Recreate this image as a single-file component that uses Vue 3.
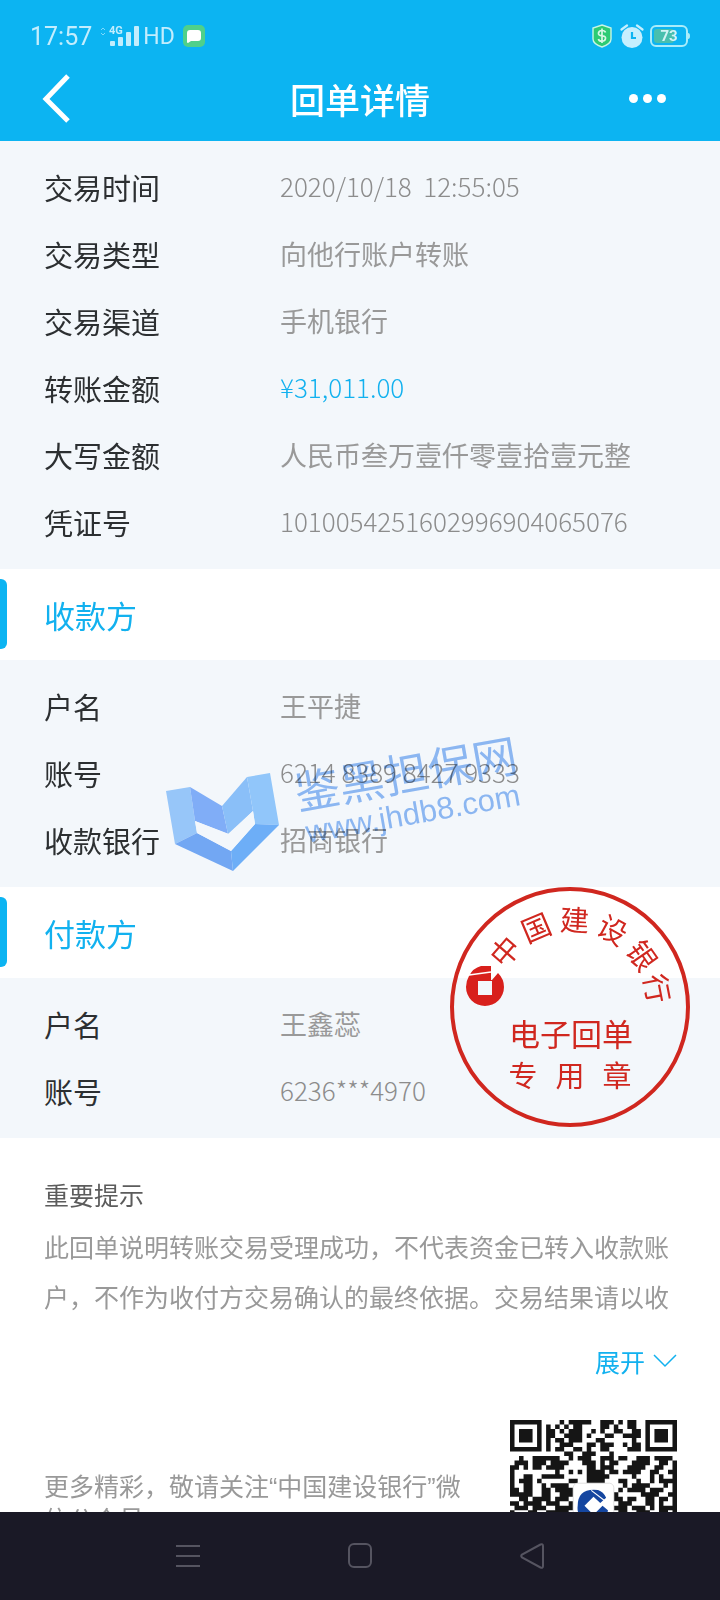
<template>
  <div class="screen">
    <header class="top">
      <div class="status">
        <div class="status-left">
          <span class="clock">17:57</span>
          <svg class="signal" viewBox="0 0 39 24" aria-hidden="true">
            <path d="M1 6l2-2 2 2M1 9l2 2 2-2" fill="none" stroke="#7ed8fb" />
            <text x="9" y="10" class="signal-text">4G</text>
            <rect x="10" y="17" width="5" height="5" rx="1" />
            <rect x="18" y="13" width="5" height="9" rx="1" />
            <rect x="26" y="8" width="5" height="14" rx="1" />
            <rect x="34" y="2" width="5" height="20" rx="1" />
          </svg>
          <span class="hd">HD</span>
          <svg class="chat" viewBox="0 0 22 22" aria-hidden="true">
            <rect width="22" height="22" rx="5" fill="#4fd08a" />
            <path d="M7 5h8q3 0 3 3v5q0 3-3 3H8l-3 2q-1 0-1-1V8q0-3 3-3z" fill="#fff" />
          </svg>
        </div>
        <div class="status-right">
          <svg class="shield" viewBox="0 0 20 24" aria-hidden="true">
            <path d="M10 1l9 3v11q0 5-9 8-9-3-9-8V4z" fill="#2dcb74" stroke="#c8f5e4" stroke-width="1.4" />
            <path d="M13.5 8.500q-.5-2-3.500-2t-3.500 2.500 3.500 2.800 3.500 2.800-3.500 2.600-3.600-2.200M10 4.500v14.500" fill="none" stroke="#d8f8e6" stroke-width="1.700" />
          </svg>
          <svg class="alarm" viewBox="0 0 24 24" aria-hidden="true">
            <circle cx="12" cy="13.500" r="10.500" fill="#c6effe" />
            <path d="M1.500 5.500l5.500-4M22.500 5.500l-5.500-4" stroke="#c6effe" stroke-width="2.200" stroke-linecap="round" />
            <path d="M12 8v6h4" fill="none" stroke="#0cb4f2" stroke-width="2.200" />
          </svg>
          <svg class="battery" viewBox="0 0 40 22" aria-hidden="true">
            <rect x="1" y="1" width="36" height="20" rx="5" fill="none" stroke="#a9ecfa" stroke-width="2" />
            <rect x="4" y="4" width="20" height="14" rx="3" fill="#48bfae" />
            <path d="M38 8q2 0 2 3t-2 3z" fill="#a9ecfa" />
            <text x="19" y="16" text-anchor="middle" class="battery-text">73</text>
          </svg>
        </div>
      </div>
      <div class="bar">
        <button class="back" type="button" aria-label="返回">
          <svg viewBox="0 0 28 50"><path d="M26 2L4 25l22 22" fill="none" stroke="#fff" stroke-width="5" /></svg>
        </button>
        <h1>回单详情</h1>
        <button class="more" type="button" aria-label="更多">
          <i></i><i></i><i></i>
        </button>
      </div>
    </header>

    <main class="content">
      <dl class="rows">
        <div v-for="row in detail" :key="row.label" class="row">
          <dt>{{ row.label }}</dt>
          <dd :class="row.kind">{{ row.value }}</dd>
        </div>
      </dl>

      <section class="party">
        <h2>收款方</h2>
        <dl class="rows">
          <div v-for="row in payee" :key="row.label" class="row">
            <dt>{{ row.label }}</dt>
            <dd :class="row.kind">{{ row.value }}</dd>
          </div>
        </dl>
        <svg class="watermark" viewBox="0 0 372 150" aria-hidden="true">
          <path d="M6 61l24-4 5 34 2 12-22 11z" fill="#9fcdfd" />
          <path d="M30 57l32 19 6 28-33-13z" fill="#86b3fb" />
          <path d="M62 76l25-29 6 34-25 23z" fill="#91c5fc" />
          <path d="M87 47l23-4 9 52-24-1-2-13z" fill="#98cdfe" />
          <path d="M15 114l22-11 34 18 2 20z" fill="#78adf7" />
          <path d="M71 121l24-27 24 1-46 46z" fill="#72b4fb" />
          <path d="M35 91l34 13 24-23 2 13-24 27-34-18z" fill="#fff" />
          <g transform="translate(138 80) rotate(-10)" class="watermark-text">
            <text x="0" y="0" class="watermark-name">鉴黑担保网</text>
            <text x="4" y="34" class="watermark-url">www.jhdb8.com</text>
          </g>
        </svg>
      </section>

      <section class="party">
        <h2>付款方</h2>
        <dl class="rows">
          <div v-for="row in payer" :key="row.label" class="row">
            <dt>{{ row.label }}</dt>
            <dd :class="row.kind">{{ row.value }}</dd>
          </div>
        </dl>
        <svg class="seal" viewBox="0 0 240 240">
          <circle cx="120" cy="120" r="118" fill="none" stroke="#d0271f" stroke-width="4" />
          <g class="seal-arc">
            <text
              v-for="item in sealArc"
              :key="item.char"
              x="120"
              y="44"
              :transform="`rotate(${item.angle} 122 120)`"
            >{{ item.char }}</text>
          </g>
          <path
            d="M41 79H31Q23 81 19 89 16 94 16 100A19 19 0 0 0 54 100Q54 92 48 86L42 93H41zM28 94H42V108H28z"
            fill="#d8201c"
            fill-rule="evenodd"
          />
          <path d="M19 88l22-3" stroke="#fff" stroke-width="1.500" />
          <text x="121" y="159" class="seal-line">电子回单</text>
          <g class="seal-small">
            <text x="73" y="200">专</text>
            <text x="120" y="200">用</text>
            <text x="167" y="200">章</text>
          </g>
        </svg>
      </section>

      <section class="notice">
        <h3>重要提示</h3>
        <p>此回单说明转账交易受理成功，不代表资金已转入收款账户，不作为收付方交易确认的最终依据。交易结果请以收</p>
        <button class="expand" type="button">
          展开
          <svg viewBox="0 0 24 14" aria-hidden="true"><path d="M1 1l11 11L23 1" fill="none" stroke="#12b1ef" stroke-width="1.500" /></svg>
        </button>
      </section>

      <section class="follow">
        <p>更多精彩，敬请关注“中国建设银行”微信公众号</p>
        <svg class="qr" viewBox="0 0 37 37" role="img" aria-label="二维码">
          <path :d="qrPath" fill="#151515" />
          <rect x="14" y="14" width="9" height="9" rx="1" fill="#fff" stroke="#ddd" stroke-width=".2" />
          <path
            d="M19.500 15.500Q15 15 15 19A3.300 3.300 0 0 0 21.700 20L20.500 19 18.500 21 16.500 19 18.500 17 20 18.400 21.300 17.200Q20.700 15.900 19.500 15.500z"
            fill="#1546a0"
          />
          <path d="M18 15.600l3 2.300" stroke="#fff" stroke-width=".25" />
        </svg>
      </section>
    </main>

    <nav class="keys">
      <button type="button" aria-label="菜单">
        <svg viewBox="0 0 24 26"><path d="M0 3h24M0 13h24M0 23h24" /></svg>
      </button>
      <button type="button" aria-label="主页">
        <svg viewBox="0 0 24 26"><rect x="1" y="1" width="22" height="23" rx="5" /></svg>
      </button>
      <button type="button" aria-label="后退">
        <svg viewBox="0 0 24 26"><path d="M20.500 1.500L2 11.500q-1.500 1.500 0 3l18.500 10q2.500 1 2.500-1.500V3q0-2.500-2.500-1.500z" /></svg>
      </button>
    </nav>
  </div>
</template>

<script setup>
import { computed } from 'vue'

const detail = [
  { label: '交易时间', value: '2020/10/18  12:55:05', kind: 'number' },
  { label: '交易类型', value: '向他行账户转账' },
  { label: '交易渠道', value: '手机银行' },
  { label: '转账金额', value: '¥31,011.00', kind: 'number amount' },
  { label: '大写金额', value: '人民币叁万壹仟零壹拾壹元整' },
  { label: '凭证号', value: '1010054251602996904065076', kind: 'number' },
]

const payee = [
  { label: '户名', value: '王平捷' },
  { label: '账号', value: '6214 8389 8427 9333', kind: 'number' },
  { label: '收款银行', value: '招商银行' },
]

const payer = [
  { label: '户名', value: '王鑫蕊' },
  { label: '账号', value: '6236***4970', kind: 'number' },
]

const sealArc = [
  { char: '中', angle: -49 },
  { char: '国', angle: -23 },
  { char: '建', angle: 3 },
  { char: '设', angle: 29 },
  { char: '银', angle: 55 },
  { char: '行', angle: 79 },
]

const qrRows = [
  '#######....#.#####..###.#.##..#######',
  '#.....#.#.#.#.##....##.#..##..#.....#',
  '#.###.#.##.#.###..#.#..##..##.#.###.#',
  '#.###.#.##..####.#...##..####.#.###.#',
  '#.###.#.#.##.###...##......#..#.###.#',
  '#.....#.#..###...##.###..#.##.#.....#',
  '#######.#.##..##.#..##....###.#######',
  '............##..###...#..............',
  '..#..######..#.###..###.##..###.####.',
  '.###.###.####...###.#.##...####..##.#',
  '##.#.##.####.....##.###...####..##..#',
  '#.........#..#.#.####.##.####..##..##',
  '#..##..#####.....#####.....#...#.#..#',
  '#.###.#......##..####...##..#..#.####',
  '#..##..#.####............#.####...#.#',
  '##.##..##.####..........#.####.###..#',
  '#####..##..###.........#.....####..##',
  '..##.####.###..........##.##..##.##.#',
  '##.####.###..#..........###...##.#..#',
  '.###.###..####.........###.###.#.####',
  '#...##..#####...........##..###..##.#',
  '.##.##...####..........##..####..##..',
]

const qrPath = computed(() =>
  qrRows
    .flatMap((line, y) => [...line].map((cell, x) => (cell === '#' ? `M${x} ${y}h1v1h-1z` : '')))
    .join('')
)
</script>

<style>
body {
  margin: 0;
  background: #fff;
}
</style>

<style scoped>
.screen {
  height: 100vh;
  display: flex;
  flex-direction: column;
  overflow: hidden;
  background: #fff;
  font-family: "Noto Sans CJK SC", sans-serif;
}

h1,
h2,
h3,
p,
dl,
dd {
  margin: 0;
  font-weight: 400;
}

button {
  padding: 0;
  border: 0;
  background: none;
  font-family: inherit;
}

svg {
  display: block;
}

.top {
  flex: none;
  background: #0cb4f2;
}

.status {
  height: 40px;
  padding: 16px 30px 0;
  display: flex;
  align-items: center;
  justify-content: space-between;
  color: #c3edfd;
  font-family: Roboto, sans-serif;
}

.status-left,
.status-right {
  display: flex;
  align-items: center;
  gap: 8px;
}

.clock {
  font-size: 25px;
}

.signal {
  width: 39px;
  height: 24px;
  fill: #c3edfd;
}

.signal-text {
  font: 700 11px Roboto, sans-serif;
}

.hd {
  margin-left: -4px;
  font-size: 23px;
}

.chat {
  width: 22px;
  height: 22px;
}

.shield {
  width: 20px;
  height: 24px;
}

.alarm {
  width: 24px;
  height: 24px;
}

.battery {
  width: 40px;
  height: 22px;
  margin-left: -2px;
}

.battery-text {
  font: 700 15px Roboto, sans-serif;
  fill: #d3f4f5;
}

.bar {
  height: 85px;
  padding: 0 42px;
  display: grid;
  grid-template-columns: 1fr auto 1fr;
  align-items: center;
}

.bar h1 {
  color: #fff;
  font-size: 35px;
  line-height: 50px;
  font-weight: 500;
}

.back {
  justify-self: start;
}

.back svg {
  width: 28px;
  height: 50px;
}

.more {
  justify-self: end;
  display: flex;
  gap: 5px;
  padding: 8px 12px;
}

.more i {
  width: 9px;
  height: 9px;
  border-radius: 50%;
  background: #fff;
}

.content {
  flex: 1;
  min-height: 0;
  overflow: hidden;
}

.rows {
  padding: 12px 44px 14px;
  background: #f3f7fb;
}

.row {
  display: flex;
  align-items: center;
  height: 67px;
}

dt {
  flex: none;
  width: 236px;
  color: #2c2f31;
  font-size: 29px;
}

dd {
  color: #999;
  font-size: 27px;
  white-space: pre;
}

.number {
  padding-bottom: 2px;
  color: #8c8c8c;
  font-size: 26px;
  font-weight: 300;
}

.amount {
  color: #12b1ef;
}

.party {
  position: relative;
}

.party h2 {
  position: relative;
  padding-left: 44px;
  color: #12b1ef;
  font-size: 31px;
  line-height: 91px;
}

.party h2::before {
  content: "";
  position: absolute;
  left: 0;
  top: 10px;
  width: 7px;
  height: 70px;
  border-radius: 0 6px 6px 0;
  background: #0cb4f2;
}

.watermark {
  position: absolute;
  left: 160px;
  top: 161px;
  width: 372px;
  height: 150px;
  mix-blend-mode: multiply;
}

.watermark-text {
  fill: #6ea6f2;
  opacity: 0.75;
}

.watermark-name {
  font-size: 45px;
  font-weight: 400;
}

.watermark-url {
  font-family: "Liberation Sans", sans-serif;
  font-size: 31px;
}

.seal {
  position: absolute;
  right: 30px;
  top: 0;
  width: 240px;
  height: 240px;
  fill: #d0271f;
  text-anchor: middle;
}

.seal-arc,
.seal-small {
  font-size: 29px;
}

.seal-line {
  font-size: 31px;
}

.notice {
  padding: 36px 43px 0 44px;
  display: flex;
  flex-direction: column;
}

.notice h3 {
  color: #5c5c5c;
  font-size: 25px;
  line-height: 40px;
}

.notice p {
  margin-top: 7px;
  color: #999;
  font-size: 25px;
  line-height: 50px;
}

.expand {
  align-self: flex-end;
  display: flex;
  align-items: center;
  gap: 8px;
  height: 40px;
  margin-top: 20px;
  color: #12b1ef;
  font-size: 25px;
}

.expand svg {
  width: 24px;
  height: 14px;
}

.follow {
  padding: 39px 43px 0 44px;
  display: flex;
  align-items: center;
  gap: 40px;
}

.follow p {
  flex: 1;
  color: #999;
  font-family: "Liberation Sans", "Noto Sans CJK SC", sans-serif;
  font-size: 25px;
  line-height: 33px;
}

.qr {
  flex: none;
  width: 167px;
  height: 167px;
}

.keys {
  flex: none;
  height: 88px;
  display: flex;
  align-items: center;
  justify-content: center;
  gap: 148px;
  background: #1a1926;
}

.keys svg {
  width: 24px;
  height: 26px;
  fill: none;
  stroke: #555460;
  stroke-width: 2;
}
</style>
